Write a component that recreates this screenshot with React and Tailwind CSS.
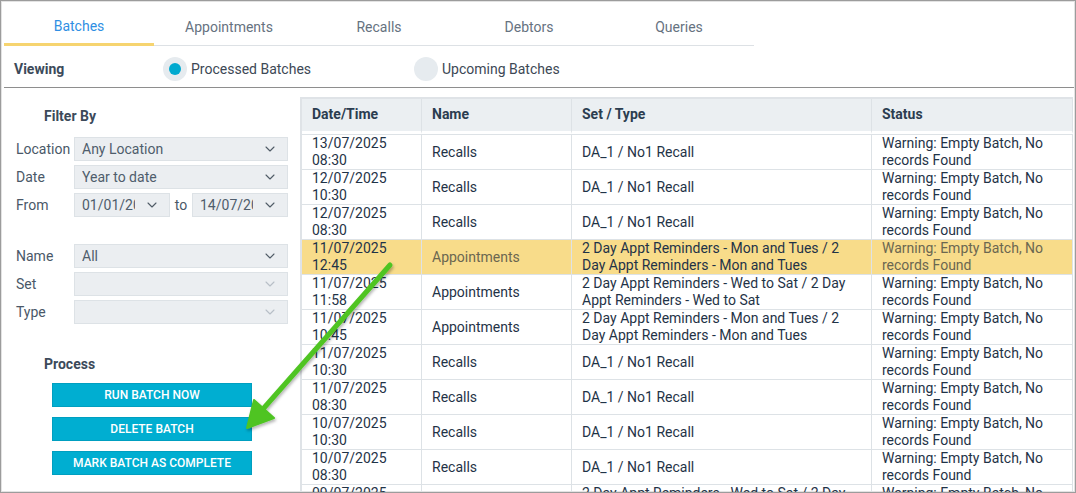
import { ChevronDown } from 'lucide-react'

const tabs = ['Batches', 'Appointments', 'Recalls', 'Debtors', 'Queries']

const status = 'Warning: Empty Batch, No records Found'
const recall = 'DA_1 / No1 Recall'
const monTues = '2 Day Appt Reminders - Mon and Tues / 2 Day Appt Reminders - Mon and Tues'
const wedSat = '2 Day Appt Reminders - Wed to Sat / 2 Day Appt Reminders - Wed to Sat'

const rows = [
  ['13/07/2025 08:30', 'Recalls', recall],
  ['12/07/2025 10:30', 'Recalls', recall],
  ['12/07/2025 08:30', 'Recalls', recall],
  ['11/07/2025 12:45', 'Appointments', monTues, true],
  ['11/07/2025 11:58', 'Appointments', wedSat],
  ['11/07/2025 10:45', 'Appointments', monTues],
  ['11/07/2025 10:30', 'Recalls', recall],
  ['11/07/2025 08:30', 'Recalls', recall],
  ['10/07/2025 10:30', 'Recalls', recall],
  ['10/07/2025 08:30', 'Recalls', recall],
  ['09/07/2025 08:30', 'Appointments', wedSat],
]

function Select({ value, disabled, className = 'w-[214px]' }) {
  return (
    <div className={`${className} h-[24px] flex items-center bg-[#ebeef1] border border-[#dde2e6] pl-[7px] pr-[9px]`}>
      <span className="flex-1 min-w-0 mr-[9px] text-[14px] text-[#4f5d6c] whitespace-nowrap overflow-hidden">{value}</span>
      <ChevronDown size={16} strokeWidth={1.6} className={disabled ? 'text-[#b7bfc7] shrink-0' : 'text-[#4f5b66] shrink-0'} />
    </div>
  )
}

function Field({ label, children }) {
  return (
    <div className="flex items-center h-[24px]">
      <span className="w-[70px] pl-[12px] text-[14px] text-[#4a5868]">{label}</span>
      {children}
    </div>
  )
}

function Radio({ checked, label }) {
  return (
    <div className="flex items-center gap-[4px]">
      <span className="w-[24px] h-[24px] rounded-full bg-[#e6ebef] flex items-center justify-center">
        {checked && <span className="w-[12px] h-[12px] rounded-full bg-[#00a9cf]" />}
      </span>
      <span className="text-[14px] text-[#3d4855]">{label}</span>
    </div>
  )
}

function Button({ children }) {
  return (
    <button className="w-[200px] h-[24px] bg-[#00aed1] border border-[#009fc0] text-white text-[12px] font-medium">
      {children}
    </button>
  )
}

export default function App() {
  return (
    <div className="w-[1076px] h-[493px] border border-[#9c9c9c] bg-white overflow-hidden relative" style={{ fontFamily: 'Roboto, "Liberation Sans", sans-serif' }}>
      <div className="h-full border border-[#e3e3e3] pl-[2px]">
        {/* tabs */}
        <div className="flex w-[750px] h-[44px] border-b border-[#dde1e5]">
          {tabs.map((t, i) => (
            <div
              key={t}
              className={`w-[150px] flex items-center justify-center pt-[8px] text-[14px] ${i === 0 ? 'text-[#2f8fe3] border-b-[3px] border-[#f6d470] -mb-px' : 'text-[#66727f]'}`}
            >
              {t}
            </div>
          ))}
        </div>

        {/* viewing */}
        <div className="h-[42px] border-b border-[#8e8e8e] flex items-center pt-[5px]">
          <span className="w-[159px] pl-[10px] text-[14px] font-bold text-[#3c4a5a]">Viewing</span>
          <div className="w-[251px]">
            <Radio checked label="Processed Batches" />
          </div>
          <Radio label="Upcoming Batches" />
        </div>

        <div className="flex">
          {/* filters */}
          <div className="w-[296px] shrink-0">
            <div className="mt-[18px] pl-[40px] text-[14px] leading-[20px] font-bold text-[#3c4a5a]">Filter By</div>
            <div className="mt-[11px] flex flex-col gap-[4px]">
              <Field label="Location"><Select value="Any Location" /></Field>
              <Field label="Date"><Select value="Year to date" /></Field>
              <Field label="From">
                <Select value="01/01/2025" className="w-[96px]" />
                <span className="w-[22px] text-center text-[14px] text-[#4a5868]">to</span>
                <Select value="14/07/2025" className="w-[96px]" />
              </Field>
            </div>
            <div className="mt-[27px] flex flex-col gap-[4px]">
              <Field label="Name"><Select value="All" /></Field>
              <Field label="Set"><Select value="" disabled /></Field>
              <Field label="Type"><Select value="" disabled /></Field>
            </div>
            <div className="mt-[30px] pl-[40px] text-[14px] leading-[20px] font-bold text-[#3c4a5a]">Process</div>
            <div className="mt-[9px] pl-[48px] flex flex-col gap-[10px]">
              <Button>RUN BATCH NOW</Button>
              <Button>DELETE BATCH</Button>
              <Button>MARK BATCH AS COMPLETE</Button>
            </div>
          </div>

          {/* table */}
          <div className="mt-[9px] border-l-2 border-t-2 border-[#dfe3e7] w-[773px]">
            <div className="grid grid-cols-[120px_150px_300px_201px] h-[35px] text-[14px] font-bold text-[#2b3d50]">
              {['Date/Time', 'Name', 'Set / Type', 'Status'].map((h) => (
                <div key={h} className="bg-[#ebeff2] border-r border-[#dde2e6] border-b-[3px] border-b-white pl-[10px] pb-[1px] flex items-center">
                  {h}
                </div>
              ))}
            </div>
            <div className="border-t border-[#dde2e6]">
              {rows.map(([date, name, set, hl], i) => (
                <div
                  key={i}
                  className={`grid grid-cols-[120px_150px_300px_201px] h-[35px] border-b border-[#dde2e6] text-[14px] leading-[17px] ${hl ? 'bg-[#f8dc8a]' : ''}`}
                >
                  <div className="border-r border-[#dde2e6] pl-[10px] pr-[10px] flex items-center text-[#1f3347]">{date}</div>
                  <div className={`border-r border-[#dde2e6] pl-[10px] flex items-center ${hl ? 'text-[#6b6750]' : 'text-[#1f3347]'}`}>{name}</div>
                  <div className="border-r border-[#dde2e6] pl-[10px] pr-[12px] flex items-center text-[#1f3347]">{set}</div>
                  <div className={`border-r border-[#dde2e6] pl-[10px] pr-[6px] flex items-center ${hl ? 'text-[#6b6750]' : 'text-[#1f3347]'}`}>{status}</div>
                </div>
              ))}
            </div>
          </div>
        </div>
      </div>

      {/* annotation arrow */}
      <svg className="absolute left-0 top-0 pointer-events-none" width="1076" height="493">
        <defs>
          <filter id="sh" x="-20%" y="-20%" width="140%" height="140%">
            <feDropShadow dx="1" dy="2" stdDeviation="1.5" floodColor="#000" floodOpacity="0.3" />
          </filter>
        </defs>
        <g filter="url(#sh)">
          <line x1="389" y1="264" x2="262" y2="408" stroke="#4fc423" strokeWidth="5" strokeLinecap="round" />
          <polygon points="246,427 253,399 273,417" fill="#4fc423" stroke="#4fc423" strokeWidth="2" strokeLinejoin="round" />
        </g>
      </svg>
    </div>
  )
}
